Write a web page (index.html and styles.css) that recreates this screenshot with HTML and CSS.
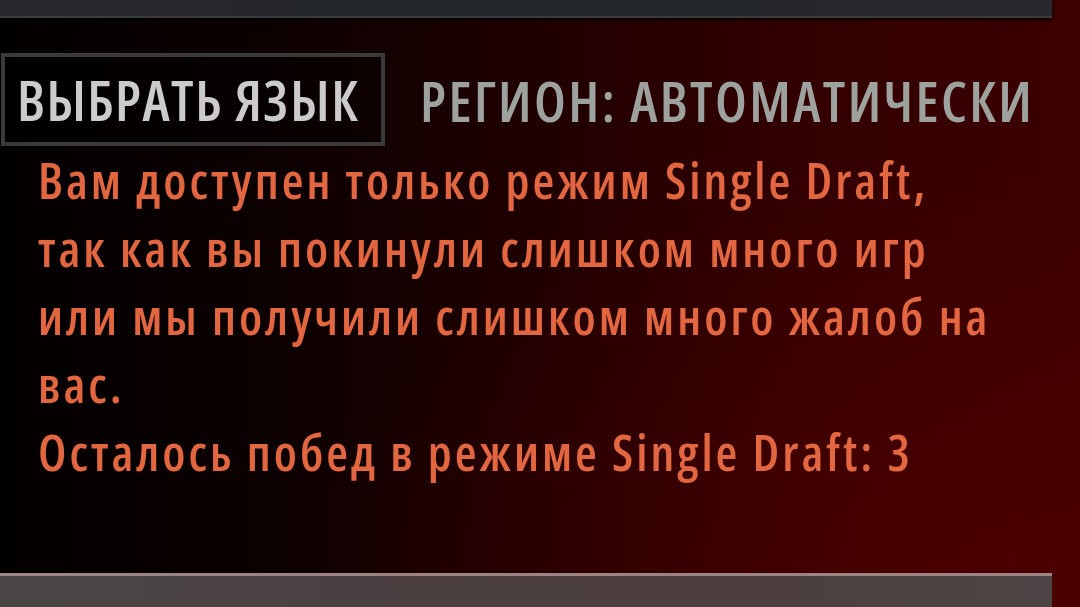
FILE: index.html
```html
<!DOCTYPE html>
<html lang="ru">
<head>
<meta charset="utf-8">
<title>Single Draft</title>
<link rel="stylesheet" href="styles.css">
</head>
<body>
<div class="screen">
  <div class="topbar"></div>
  <div class="tabs">
    <div class="lang-btn">ВЫБРАТЬ ЯЗЫК</div>
    <div class="region">РЕГИОН: АВТОМАТИЧЕСКИ</div>
  </div>
  <div class="message">
    <p class="line">Вам доступен только режим Single Draft,</p>
    <p class="line">так как вы покинули слишком много игр</p>
    <p class="line">или мы получили слишком много жалоб на</p>
    <p class="line">вас.</p>
    <p class="line">Осталось побед в режиме Single Draft: 3</p>
  </div>
  <div class="bottombar"></div>
</div>
</body>
</html>
```
FILE: styles.css
```css
html, body {
  margin: 0;
  padding: 0;
  width: 1080px;
  height: 607px;
  overflow: hidden;
}
body {
  background:
    radial-gradient(ellipse 700px 400px at 1000px 560px, rgba(90, 0, 0, 0.55), rgba(90, 0, 0, 0) 100%),
    linear-gradient(to right, #030000 0%, #0c0000 25%, #200000 50%, #330000 75%, #3c0000 100%);
  font-family: "Open Sans", "DejaVu Sans Condensed", sans-serif;
  font-stretch: 75%;
  font-weight: 600;
}
.screen {
  display: flex;
  flex-direction: column;
  height: 607px;
}
.topbar {
  width: 1052px;
  height: 16px;
  background: linear-gradient(to right, #26282c, #25282b 50%, #26282b);
  border-bottom: 2px solid #3a3c3f;
  box-shadow: 0 2px 4px rgba(0, 0, 0, 0.8);
}
.tabs {
  display: flex;
  align-items: center;
  margin-top: 35px;
}
.lang-btn {
  box-sizing: border-box;
  width: 384px;
  height: 93px;
  margin-left: 1px;
  border: 4px solid #3a3a3a;
  background: rgba(0, 0, 0, 0.35);
  color: #cbcbcb;
  font-size: 56px;
  line-height: 85px;
  padding-left: 12px;
  letter-spacing: 1.5px;
  white-space: nowrap;
}
.region {
  margin-left: 35px;
  color: #9ea29e;
  font-size: 56px;
  letter-spacing: 2.4px;
  white-space: nowrap;
}
.message {
  padding-left: 38px;
  margin-top: 0;
  color: #e2663f;
  font-size: 50px;
}
.line {
  margin: 0;
  line-height: 68px;
  height: 68px;
  letter-spacing: 3px;
  white-space: nowrap;
}
.bottombar {
  margin-top: auto;
  width: 1052px;
  height: 31px;
  border-top: 3px solid #9c8484;
  background: linear-gradient(to right, #4a4646, #4b3f40 40%, #4d3e3f 70%, #4c4444);
}
```
